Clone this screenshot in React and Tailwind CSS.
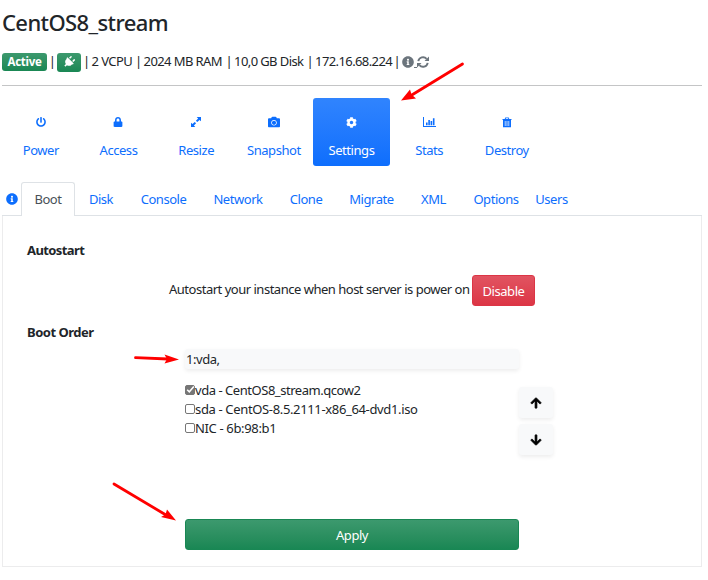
import {
  FaPowerOff,
  FaLock,
  FaCamera,
  FaCog,
  FaInfoCircle,
  FaPlug,
  FaArrowUp,
  FaArrowDown,
} from "react-icons/fa";

function BarChart() {
  return (
    <svg viewBox="0 0 13 11" className="h-[11px] w-[13px]" fill="currentColor">
      <path d="M0 0h1v9h12v1H0zM3 5.5h1.600v2.700H3zM5.300 3h1.600v5.200H5.300zM7.600 4h1.600v4.200H7.600zM9.900 1.200h1.600v7H9.900z" />
    </svg>
  );
}

function Resize() {
  return (
    <svg viewBox="0 0 10 10" className="h-[10px] w-[10px]" fill="currentColor">
      <path d="M10 0v4.300L8.500 2.900 6.300 5.100 4.900 3.700 7.100 1.500 5.700 0zM0 10V5.700l1.500 1.400 2.200-2.200 1.400 1.400-2.200 2.200L4.300 10z" />
    </svg>
  );
}

function Trash() {
  return (
    <svg viewBox="0 0 10 11" className="h-[11px] w-[10px]" fill="currentColor" fillRule="evenodd">
      <path d="M3.300.5h3.400L7.300 2H9.500v1H9v7.200H1V3H.5V2h2.200zM4 1.300L3.700 2h2.600L6 1.300zM2.800 4v5h.7V4zM4.650 4v5h.7V4zM6.500 4v5h.7V4z" />
    </svg>
  );
}

function Refresh() {
  return (
    <svg viewBox="0 0 12 12" className="h-[12px] w-[12px]">
      <path d="M1.300 5.200A4.800 4.800 0 0 1 9.600 2.800M10.700 6.800A4.800 4.800 0 0 1 2.400 9.200" fill="none" stroke="currentColor" strokeWidth="1.900" />
      <path d="M12 .5V5H7.500zM0 11.500V7h4.500z" fill="currentColor" />
    </svg>
  );
}

const specs = [
  { label: "2 VCPU", width: "w-[52px]" },
  { label: "2024 MB RAM", width: "w-[90.500px]" },
  { label: "10,0 GB Disk", width: "w-[81px]" },
  { label: "172.16.68.224", width: "w-[87px]" },
];

const actions = [
  { label: "Power", icon: <FaPowerOff size={10} /> },
  { label: "Access", icon: <FaLock size={10} /> },
  { label: "Resize", icon: <Resize /> },
  { label: "Snapshot", icon: <FaCamera size={12} /> },
  { label: "Settings", icon: <FaCog size={11} />, active: true },
  { label: "Stats", icon: <BarChart /> },
  { label: "Destroy", icon: <Trash /> },
];

const tabs = [
  { label: "Disk", width: "w-[52px]" },
  { label: "Console", width: "w-[73px]" },
  { label: "Network", width: "w-[76px]" },
  { label: "Clone", width: "w-[60px]" },
  { label: "Migrate", width: "w-[71px]" },
  { label: "XML", width: "w-[53px]" },
  { label: "Options", width: "w-[72px]" },
  { label: "Users", width: "w-[39px]" },
];

const devices = [
  { label: "vda - CentOS8_stream.qcow2", checked: true, track: "tracking-[-0.460px]" },
  { label: "sda - CentOS-8.5.2111-x86_64-dvd1.iso", checked: false, track: "tracking-[-0.350px]" },
  { label: "NIC - 6b:98:b1", checked: false, track: "tracking-[-0.350px]" },
];

function Checkbox({ checked }) {
  return (
    <span
      className={`flex h-[10px] w-[10px] shrink-0 items-center justify-center rounded-[2px] border border-[#767676] ${
        checked ? "bg-[#767676]" : "bg-white"
      }`}
    >
      {checked && (
        <svg viewBox="0 0 10 10" className="h-[9px] w-[9px] shrink-0" fill="none" stroke="white" strokeWidth="1.7">
          <path d="M1.3 5.2l2.4 2.4 5-5.8" />
        </svg>
      )}
    </span>
  );
}

function Annotations() {
  return (
    <svg
      className="pointer-events-none absolute left-0 top-0"
      width="708"
      height="580"
      stroke="#ff0000"
      strokeWidth="2.8"
      strokeLinecap="round"
      fill="#ff0000"
    >
      <path d="M462.500 64L411 95.500" />
      <path stroke="none" d="M401 100.500L410 89.500L411.500 94.500L416 98.500Z" />
      <path d="M135.500 357.700L168 359" />
      <path stroke="none" d="M179 359.500L164.500 354.500L167 359L164.500 363.500Z" />
      <path d="M114 484L166 515" />
      <path stroke="none" d="M176 520.500L167 509.500L165.500 514.500L161 517Z" />
    </svg>
  );
}

export default function App() {
  return (
    <div className="relative h-[580px] w-[708px] overflow-hidden bg-white pl-[2px] font-['Noto_Sans',sans-serif] text-[13px] leading-[19px] tracking-[-0.450px] text-[#212529]">
      <h3 className="flex h-[44px] items-center text-[22px] font-medium leading-[26px] tracking-[-0.600px]">
        CentOS8_stream
      </h3>
      <div className="mt-[2px] flex h-[32px] items-center whitespace-nowrap">
        <span className="flex h-[18px] w-[45px] items-center justify-center rounded-[3px] bg-linear-to-b from-[#3c996e] to-[#198754] pb-px text-[11.500px] font-bold tracking-[-0.300px] text-white">
          Active
        </span>
        <span className="w-[10px] pb-px text-center">|</span>
        <span className="flex h-[19px] w-[24px] items-center justify-center rounded-[3px] bg-linear-to-b from-[#3c996e] to-[#198754] text-white">
          <FaPlug size={12} className="rotate-45" />
        </span>
        <span className="ml-[2px] flex pb-px tracking-[-0.600px]">
          {specs.map((s) => (
            <span key={s.label} className={`flex gap-[2px] ${s.width}`}>
              <span>|</span>
              <span>{s.label}</span>
            </span>
          ))}
          <span>|</span>
        </span>
        <span className="ml-[2px] flex items-center text-[#6c757d]">
          <FaInfoCircle size={12} />
          <span className="mt-[10px] h-px w-[3px] bg-[#6c757d]" />
          <Refresh />
        </span>
      </div>
      <div className="mt-[7px] h-px w-[700px] bg-[#c4c5c6]" />

      <div className="mt-[12px] grid w-[699px] grid-cols-9">
        {actions.map((a) => (
          <div
            key={a.label}
            className={`flex h-[68px] flex-col items-center rounded-[3px] pt-[17px] ${
              a.active ? "bg-linear-to-b from-[#3084fe] to-[#0d6efd] text-white" : "text-[#0d6efd]"
            }`}
          >
            <span className="flex h-[14px] items-center">{a.icon}</span>
            <span className="mt-[12px]">{a.label}</span>
          </div>
        ))}
      </div>

      <div className="mt-[16px] flex h-[34px] w-[700px] items-end border-b border-[#dee2e6] text-[#0d6efd]">
        <span className="flex h-[33px] w-[19px] items-center justify-center">
          <FaInfoCircle size={12} />
        </span>
        <span className="-mb-px flex h-[34px] w-[54px] items-center justify-center rounded-t-[3px] border border-b-0 border-[#dee2e6] bg-white text-[#495057]">
          Boot
        </span>
        {tabs.map((t) => (
          <span key={t.label} className={`flex h-[32px] items-center justify-center ${t.width}`}>
            {t.label}
          </span>
        ))}
      </div>

      <div className="h-[351px] w-[700px] border border-t-0 border-[#ececed] pl-[24px] pt-[25px]">
        <p className="font-bold tracking-[-0.600px]">Autostart</p>
        <div className="mt-[15px] flex h-[31px] pl-[142px]">
          <span className="w-[303px] whitespace-nowrap pt-[5px] tracking-[-0.490px]">
            Autostart your instance when host server is power on
          </span>
          <button className="h-[31px] w-[63px] rounded-[3px] border border-[#dc3545] bg-linear-to-b from-[#e15361] to-[#dc3545] pt-px text-white">
            Disable
          </button>
        </div>
        <p className="mt-[17px] font-bold tracking-[-0.500px]">Boot Order</p>
        <div className="ml-[158px] mt-[7px] flex h-[20px] w-[334px] items-center rounded-[3px] bg-[#f8f9fa] pl-px shadow-[0_2px_4px_rgba(0,0,0,0.075)]">
          1:vda,
        </div>
        <div className="ml-[158px] mt-[12px] flex h-[138px]">
          <div className="w-[334px]">
            {devices.map((d) => (
              <label key={d.label} className="flex h-[19px] items-center">
                <span className="pb-[2px]">
                  <Checkbox checked={d.checked} />
                </span>
                <span className={d.track}>{d.label}</span>
              </label>
            ))}
          </div>
          <div className="flex flex-col gap-[6px] pt-[6px]">
            {[FaArrowUp, FaArrowDown].map((Icon, i) => (
              <button
                key={i}
                className="flex h-[31px] w-[34px] items-center justify-center rounded-[3px] bg-[#f8f9fa] pt-px text-black shadow-[0_2px_4px_rgba(0,0,0,0.075)]"
              >
                <Icon size={12} stroke="currentColor" strokeWidth={30} />
              </button>
            ))}
          </div>
        </div>
        <button className="ml-[158px] h-[31px] w-[334px] rounded-[3px] border border-[#198754] bg-linear-to-b from-[#3c996e] to-[#198754] pt-px text-white">
          Apply
        </button>
      </div>
      <Annotations />
    </div>
  );
}
